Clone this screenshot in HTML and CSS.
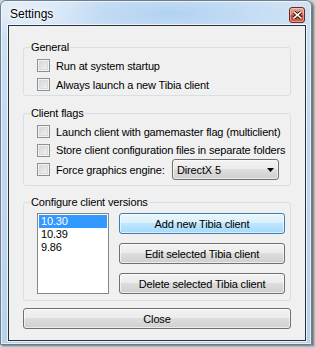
FILE: index.html
```html
<!DOCTYPE html>
<html lang="en">
<head>
    <meta charset="UTF-8">
    <title>Settings</title>
    <link rel="stylesheet" href="styles.css">
</head>
<body>
    <div class="window">
        <div class="titlebar">
            <span class="title">Settings</span>
            <button class="caption-close" title="Close">
                <svg width="9" height="8" viewBox="0 0 9 8">
                    <path d="M1 1 L8 7 M8 1 L1 7" stroke="#3a1510" stroke-width="3.4" stroke-linecap="square"/>
                    <path d="M1 1 L8 7 M8 1 L1 7" stroke="#ffffff" stroke-width="1.6" stroke-linecap="square"/>
                </svg>
            </button>
        </div>
        <div class="client">
            <fieldset class="group group-general">
                <legend>General</legend>
                <label class="check-row"><input type="checkbox" class="check"><span>Run at system startup</span></label>
                <label class="check-row"><input type="checkbox" class="check"><span>Always launch a new Tibia client</span></label>
            </fieldset>

            <fieldset class="group group-flags">
                <legend>Client flags</legend>
                <label class="check-row"><input type="checkbox" class="check"><span>Launch client with gamemaster flag (multiclient)</span></label>
                <label class="check-row row-short"><input type="checkbox" class="check"><span>Store client configuration files in separate folders</span></label>
                <div class="check-row engine-row">
                    <input type="checkbox" class="check">
                    <span class="engine-label">Force graphics engine:</span>
                    <div class="combo">
                        <span>DirectX 5</span>
                        <svg width="7" height="4" viewBox="0 0 7 4"><path d="M0 0 H7 L3.5 4 Z" fill="#000"/></svg>
                    </div>
                </div>
            </fieldset>

            <fieldset class="group group-versions">
                <legend>Configure client versions</legend>
                <div class="versions">
                    <ul class="listbox">
                        <li class="selected">10.30</li>
                        <li>10.39</li>
                        <li>9.86</li>
                    </ul>
                    <div class="version-buttons">
                        <button class="btn btn-default">Add new Tibia client</button>
                        <button class="btn">Edit selected Tibia client</button>
                        <button class="btn">Delete selected Tibia client</button>
                    </div>
                </div>
            </fieldset>

            <button class="btn btn-close">Close</button>
        </div>
    </div>
</body>
</html>
```

FILE: styles.css
```css
body {
    margin: 0;
    width: 316px;
    height: 348px;
    background-color: #d2d2d2;
    font-family: "Liberation Sans", Arial, sans-serif;
    font-size: 11px;
    letter-spacing: -0.15px;
    color: #000000;
    overflow: hidden;
}

button, input {
    font: inherit;
    letter-spacing: inherit;
    color: inherit;
}

.window {
    box-sizing: border-box;
    width: 312px;
    height: 345px;
    border: 1px solid #6f7e8e;
    border-radius: 6px 6px 0 0;
    padding: 0 5px 3px 7px;
    background:
        radial-gradient(ellipse 80px 28px at 20px 10px, rgba(255, 255, 255, 0.5), rgba(255, 255, 255, 0)),
        radial-gradient(ellipse 120px 24px at 170px 12px, rgba(150, 195, 240, 0.5), rgba(150, 195, 240, 0)),
        linear-gradient(#cfe2f5, #c0d8f0 40%, #b9d2ec);
    box-shadow: inset 0 0 0 1px rgba(255, 255, 255, 0.6), 2px 1px 2px rgba(0, 0, 0, 0.45);
}

.titlebar {
    height: 24px;
    display: flex;
    align-items: center;
    justify-content: space-between;
}

.title {
    margin-left: 2px;
    margin-top: 2px;
    font-size: 12px;
    letter-spacing: 0;
    text-shadow: 0 0 6px #ffffff, 0 0 3px #ffffff;
}

.caption-close {
    box-sizing: border-box;
    width: 16px;
    height: 16px;
    margin-top: 4px;
    margin-right: 1px;
    padding: 0;
    border: 1px solid #6b2a20;
    border-radius: 3px;
    background: linear-gradient(#e9a898, #d77a66 45%, #c2412a 55%, #d0664c);
    box-shadow: inset 0 0 0 1px rgba(255, 220, 210, 0.5);
    display: flex;
    align-items: center;
    justify-content: center;
}

.client {
    box-sizing: border-box;
    height: 316px;
    border: 1px solid #28323c;
    background-color: #f0f0f0;
    padding: 14px 14px 0 14px;
    box-shadow: 0 0 0 1px rgba(255, 255, 255, 0.7);
}

.group {
    box-sizing: border-box;
    margin: 0;
    min-width: 0;
    border: 1px solid #d5dfe5;
    border-radius: 3px;
    padding: 2px 0 0 13px;
}

.group legend {
    margin-left: -7px;
    padding: 0 1px;
    line-height: 14px;
}

.group-general {
    height: 56px;
}

.group-flags {
    height: 80px;
    margin-top: 10px;
}

.group-versions {
    height: 106px;
    margin-top: 9px;
    padding-top: 4px;
}

.check-row {
    display: flex;
    align-items: center;
    height: 19px;
    white-space: nowrap;
}

.row-short {
    height: 18px;
}

.engine-row {
    height: 21px;
}

.check {
    appearance: none;
    box-sizing: border-box;
    width: 13px;
    height: 13px;
    margin: 0 6px 0 0;
    border: 1px solid #8e8f8f;
    background: linear-gradient(135deg, #cfd2d6, #f6f6f6);
    box-shadow: inset 0 0 0 1px #f4f4f4, inset 0 0 0 2px #d8dadd;
    flex: none;
}

.engine-label {
    width: 116px;
}

.combo {
    box-sizing: border-box;
    width: 107px;
    height: 21px;
    display: flex;
    align-items: center;
    justify-content: space-between;
    padding: 0 4px 0 4px;
    border: 1px solid #707070;
    border-radius: 3px;
    background: linear-gradient(#f2f2f2, #ebebeb 49%, #dddddd 50%, #cfcfcf);
    box-shadow: inset 0 0 0 1px rgba(255, 255, 255, 0.6);
}

.versions {
    display: flex;
    gap: 10px;
}

.listbox {
    box-sizing: border-box;
    width: 72px;
    height: 81px;
    margin: 0;
    padding: 1px;
    list-style: none;
    border: 1px solid #828790;
    background-color: #ffffff;
}

.listbox li {
    height: 13px;
    line-height: 13px;
    padding-left: 2px;
}

.listbox li.selected {
    background-color: #3399ff;
    color: #ffffff;
}

.version-buttons {
    display: flex;
    flex-direction: column;
    gap: 9px;
}

.btn {
    box-sizing: border-box;
    height: 21px;
    padding: 0;
    border: 1px solid #707070;
    border-radius: 3px;
    background: linear-gradient(#f2f2f2, #ebebeb 49%, #dddddd 50%, #cfcfcf);
    box-shadow: inset 0 0 0 1px rgba(255, 255, 255, 0.6);
}

.version-buttons .btn {
    width: 166px;
}

.btn-default {
    border-color: #3c7fb1;
    background: linear-gradient(#eaf6fd, #d9f0fc 49%, #bee6fd 50%, #a7d9f5);
}

.btn-close {
    display: block;
    width: 268px;
    margin-top: 7px;
}
```
